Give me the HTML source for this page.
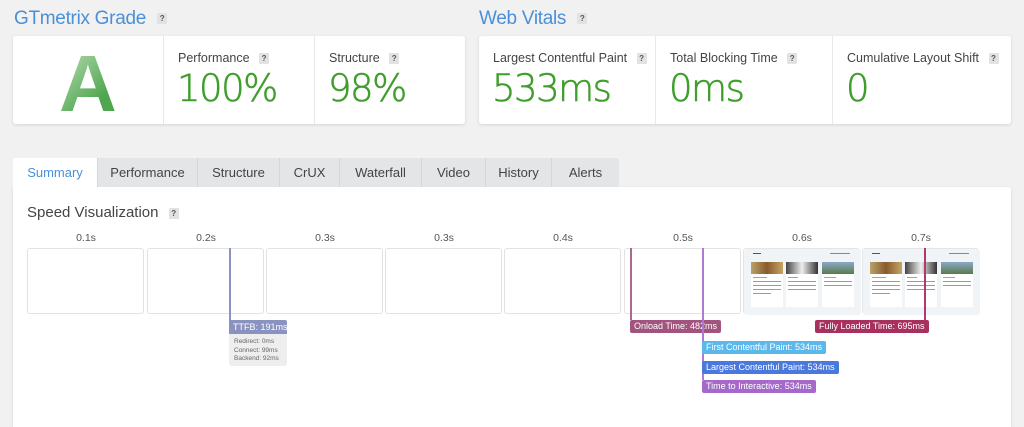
<!DOCTYPE html>
<html><head><meta charset="utf-8"><style>
*{box-sizing:border-box;margin:0;padding:0}
body{width:1024px;height:407px;overflow:hidden;background:#f1f1f1;font-family:"Liberation Sans",sans-serif;position:relative;color:#444}
.abs{position:absolute}
h2{position:absolute;font-weight:normal;font-size:19px;color:#4a90d9;letter-spacing:-0.3px}
.q{display:inline-block;width:10px;height:11px;background:#e2e2e2;color:#555;font-size:8px;line-height:11px;text-align:center;vertical-align:middle;margin-left:6px;border-radius:1px;font-weight:bold}
.panel{position:absolute;background:#fff;border-radius:3px;box-shadow:0 1px 3px rgba(0,0,0,.12)}
.cell{position:absolute;top:0;height:100%;border-left:1px solid #e8e8e8}
.lbl{position:absolute;left:14px;top:15px;font-size:12.5px;color:#444;white-space:nowrap}
.big{position:absolute;left:13px;top:31px;font-family:"DejaVu Sans",sans-serif;font-weight:200;font-size:37px;color:#3f9e2c;letter-spacing:-1.5px;white-space:nowrap;-webkit-text-stroke:0.6px #3f9e2c}
.tab{position:absolute;top:158px;height:29px;background:#e3e5e7;border-left:1px solid #d4d6d8;font-size:13px;color:#444;text-align:center;line-height:29px}
.frame{position:absolute;top:248px;width:117px;height:66px;border:1px solid #e2e2e2;border-radius:3px;background:#fff}
.tl{position:absolute;top:232px;font-size:10.5px;color:#555;width:60px;text-align:center}
.badge{position:absolute;height:13px;font-size:9px;color:#fff;line-height:13px;padding:0 4px;border-radius:2px;white-space:nowrap}
.vl{position:absolute;width:2px}
.th{position:absolute;top:0;width:117px;height:66px;background:#f0f4f7;border-radius:3px;overflow:hidden}
.card{position:absolute;top:13px;width:32px;height:45px;background:#fff}
.img{height:12px}
.ln{height:1px;background:#99a;margin:3px 2px 0;}
</style></head><body>
<h2 style="left:14px;top:8px">GTmetrix Grade <span class="q">?</span></h2>
<h2 style="left:479px;top:8px">Web Vitals <span class="q">?</span></h2>

<div class="panel" style="left:13px;top:36px;width:452px;height:88px">
 <div class="abs" style="left:46px;top:6px;font-size:80px;font-weight:bold;background:linear-gradient(135deg,#c5e3bd,#4fa64f 70%);-webkit-background-clip:text;background-clip:text;color:transparent;line-height:84px">A</div>
 <div class="cell" style="left:150px;width:151px"><div class="lbl">Performance <span class="q">?</span></div><div class="big">100%</div></div>
 <div class="cell" style="left:301px;width:151px"><div class="lbl">Structure <span class="q">?</span></div><div class="big">98%</div></div>
</div>

<div class="panel" style="left:479px;top:36px;width:532px;height:88px">
 <div class="cell" style="left:0;border:none;width:167px"><div class="lbl">Largest Contentful Paint <span class="q">?</span></div><div class="big">533ms</div></div>
 <div class="cell" style="left:176px;width:167px"><div class="lbl">Total Blocking Time <span class="q">?</span></div><div class="big">0ms</div></div>
 <div class="cell" style="left:353px;width:179px"><div class="lbl">Cumulative Layout Shift <span class="q">?</span></div><div class="big">0</div></div>
</div>

<div class="panel" style="left:13px;top:187px;width:998px;height:240px;border-radius:0 3px 0 0"></div>
<div class="tab" style="left:13px;width:84px;background:#fff;border:none;color:#4a90d9">Summary</div>
<div class="tab" style="left:97px;width:100px">Performance</div>
<div class="tab" style="left:197px;width:82px">Structure</div>
<div class="tab" style="left:279px;width:60px">CrUX</div>
<div class="tab" style="left:339px;width:82px">Waterfall</div>
<div class="tab" style="left:421px;width:64px">Video</div>
<div class="tab" style="left:485px;width:66px">History</div>
<div class="tab" style="left:551px;width:68px;border-radius:0 3px 0 0">Alerts</div>

<div class="abs" style="left:27px;top:204px;font-size:15px;color:#444">Speed Visualization <span class="q">?</span></div>

<div class="tl" style="left:56px">0.1s</div>
<div class="tl" style="left:176px">0.2s</div>
<div class="tl" style="left:295px">0.3s</div>
<div class="tl" style="left:414px">0.3s</div>
<div class="tl" style="left:533px">0.4s</div>
<div class="tl" style="left:653px">0.5s</div>
<div class="tl" style="left:772px">0.6s</div>
<div class="tl" style="left:891px">0.7s</div>

<div class="frame" style="left:27px"></div>
<div class="frame" style="left:147px"></div>
<div class="frame" style="left:266px"></div>
<div class="frame" style="left:385px"></div>
<div class="frame" style="left:504px"></div>
<div class="frame" style="left:624px"></div>
<div class="frame" style="left:743px;border:1px solid #e2e6e8">
 <div class="th">
  <div class="abs" style="left:9px;top:4px;width:8px;height:1px;background:#555"></div>
  <div class="abs" style="left:86px;top:4px;width:20px;height:1px;background:#888"></div>
  <div class="card" style="left:7px"><div class="img" style="background:linear-gradient(90deg,#b9a26a,#8a5a2c,#c5a566)"></div><div class="ln" style="width:14px;background:#8ab"></div><div class="ln"></div><div class="ln"></div><div class="ln"></div><div class="ln" style="width:18px"></div></div>
  <div class="card" style="left:42px"><div class="img" style="background:linear-gradient(90deg,#444,#eee 50%,#333)"></div><div class="ln" style="width:10px;background:#8ab"></div><div class="ln"></div><div class="ln"></div><div class="ln"></div></div>
  <div class="card" style="left:78px"><div class="img" style="background:linear-gradient(180deg,#8aa8c8,#5a7a4a)"></div><div class="ln" style="width:12px;background:#8ab"></div><div class="ln"></div><div class="ln"></div></div>
 </div>
</div>
<div class="frame" style="left:862px;border:1px solid #e2e6e8">
 <div class="th">
  <div class="abs" style="left:9px;top:4px;width:8px;height:1px;background:#555"></div>
  <div class="abs" style="left:86px;top:4px;width:20px;height:1px;background:#888"></div>
  <div class="card" style="left:7px"><div class="img" style="background:linear-gradient(90deg,#b9a26a,#8a5a2c,#c5a566)"></div><div class="ln" style="width:14px;background:#8ab"></div><div class="ln"></div><div class="ln"></div><div class="ln"></div><div class="ln" style="width:18px"></div></div>
  <div class="card" style="left:42px"><div class="img" style="background:linear-gradient(90deg,#444,#eee 50%,#333)"></div><div class="ln" style="width:10px;background:#8ab"></div><div class="ln"></div><div class="ln"></div><div class="ln"></div></div>
  <div class="card" style="left:78px"><div class="img" style="background:linear-gradient(180deg,#8aa8c8,#5a7a4a)"></div><div class="ln" style="width:12px;background:#8ab"></div><div class="ln"></div><div class="ln"></div></div>
 </div>
</div>

<div class="vl" style="left:229px;top:248px;height:72px;background:#8a93c0"></div>
<div class="badge" style="left:229px;top:320px;background:#8a93c0;height:14px;line-height:14px;width:58px;border-radius:0 2px 0 0;overflow:hidden">TTFB: 191ms</div>
<div class="abs" style="left:229px;top:334px;width:58px;height:32px;background:#eeeeee;border-radius:0 0 3px 3px;font-size:6.5px;color:#666;padding:4px 5px;line-height:8.5px">Redirect: 0ms<br>Connect: 99ms<br>Backend: 92ms</div>

<div class="vl" style="left:630px;top:248px;height:72px;background:#a86a90"></div>
<div class="badge" style="left:630px;top:320px;background:#a0547e">Onload Time: 482ms</div>

<div class="vl" style="left:702px;top:248px;height:132px;background:#b07ad0"></div>
<div class="badge" style="left:702px;top:341px;background:#5bb8ec">First Contentful Paint: 534ms</div>
<div class="badge" style="left:702px;top:361px;background:#4a78dc">Largest Contentful Paint: 534ms</div>
<div class="badge" style="left:702px;top:380px;background:#a569c9">Time to Interactive: 534ms</div>

<div class="vl" style="left:924px;top:248px;height:72px;background:#b03a6e"></div>
<div class="badge" style="left:815px;top:320px;background:#a8305f">Fully Loaded Time: 695ms</div>
</body></html>
